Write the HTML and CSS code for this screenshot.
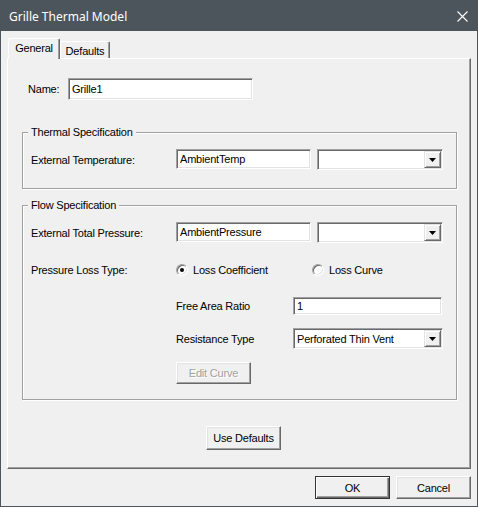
FILE: index.html
```html
<!DOCTYPE html>
<html>
<head>
<meta charset="utf-8">
<title>Grille Thermal Model</title>
<link rel="stylesheet" href="styles.css">
</head>
<body>
<div class="window">
  <div class="titlebar">
    <span class="title">Grille Thermal Model</span>
    <svg class="close" width="11" height="11" viewBox="0 0 11 11"><path d="M0.5 0.5 L10.5 10.5 M10.5 0.5 L0.5 10.5" stroke="#fff" stroke-width="1.1" fill="none"/></svg>
  </div>
  <div class="client">
    <div class="tabs">
      <div class="tab active">General</div>
      <div class="tab">Defaults</div>
    </div>
    <div class="panel">
      <div class="name-row">
        <span class="name-label">Name:</span>
        <div class="field name-field">Grille1</div>
      </div>

      <div class="group g1">
        <div class="legend">Thermal Specification</div>
        <div class="row row-field first">
          <span class="lbl">External Temperature:</span>
          <div class="field val">AmbientTemp</div>
          <div class="combo units"><span class="combo-text"></span><span class="combo-btn"><svg width="7" height="4" viewBox="0 0 7 4"><path d="M0 0H7L3.5 4Z" fill="#000"/></svg></span></div>
        </div>
      </div>

      <div class="group g2">
        <div class="legend">Flow Specification</div>
        <div class="row row-field first">
          <span class="lbl">External Total Pressure:</span>
          <div class="field val">AmbientPressure</div>
          <div class="combo units"><span class="combo-text"></span><span class="combo-btn"><svg width="7" height="4" viewBox="0 0 7 4"><path d="M0 0H7L3.5 4Z" fill="#000"/></svg></span></div>
        </div>
        <div class="row row-radio">
          <span class="lbl">Pressure Loss Type:</span>
          <label class="opt opt1"><span class="radio"><span class="dot"></span></span>Loss Coefficient</label>
          <label class="opt"><span class="radio"></span>Loss Curve</label>
        </div>
        <div class="row row-free">
          <span class="lbl2">Free Area Ratio</span>
          <div class="field ratio">1</div>
        </div>
        <div class="row row-res">
          <span class="lbl2">Resistance Type</span>
          <div class="combo restype"><span class="combo-text">Perforated Thin Vent</span><span class="combo-btn"><svg width="7" height="4" viewBox="0 0 7 4"><path d="M0 0H7L3.5 4Z" fill="#000"/></svg></span></div>
        </div>
        <div class="row row-btn">
          <div class="btn disabled">Edit Curve</div>
        </div>
      </div>

      <div class="btn use-defaults">Use Defaults</div>
    </div>
    <div class="footer">
      <div class="btn default">OK</div>
      <div class="btn">Cancel</div>
    </div>
  </div>
</div>
</body>
</html>
```

FILE: styles.css
```css
* { box-sizing: border-box; }
html, body { margin: 0; padding: 0; background: #f0f0f0; }
body {
  font-family: "Liberation Sans", Arial, sans-serif;
  font-size: 11px;
  letter-spacing: -0.2px;
  color: #000;
}
.window {
  width: 478px;
  height: 507px;
  border: 1px solid #4c555b;
  background: #f0f0f0;
  display: flex;
  flex-direction: column;
}
.titlebar {
  height: 30px;
  flex: none;
  background: #4c555b;
  color: #fff;
  display: flex;
  align-items: center;
  justify-content: space-between;
  padding: 0 9px 0 8px;
  font-family: "Noto Sans", sans-serif;
  font-size: 12px;
  letter-spacing: 0;
}
.close { display: block; }
.client {
  flex: 1;
  padding: 0 6px;
  display: flex;
  flex-direction: column;
}
.tabs {
  height: 20px;
  margin-top: 7px;
  padding-left: 1px;
  display: flex;
  align-items: flex-end;
}
.tab {
  height: 17px;
  width: 50px;
  border-top: 1px solid #fff;
  border-left: 1px solid #fff;
  border-right: 1px solid #696969;
  box-shadow: inset -1px 0 0 #a0a0a0;
  border-radius: 2px 2px 0 0;
  display: flex;
  align-items: center;
  justify-content: center;
  padding-top: 1px;
}
.tab.active {
  height: 21px;
  width: 52px;
  margin-bottom: -1px;
  position: relative;
  z-index: 1;
  background: #f0f0f0;
  padding-top: 0;
  padding-bottom: 3px;
}
.panel {
  height: 411px;
  flex: none;
  border: 1px solid;
  border-color: #fff #696969 #696969 #fff;
  box-shadow: inset -1px -1px 0 #a0a0a0;
  padding: 19px 0 0 14px;
}
.name-row {
  display: flex;
  align-items: center;
  height: 22px;
}
.name-label { margin-left: 6px; width: 40px; }
.field {
  background: #fff;
  border: 1px solid;
  border-color: #a0a0a0 #fff #fff #a0a0a0;
  box-shadow: inset 1px 1px 0 #696969, inset -1px -1px 0 #e3e3e3;
  padding: 0 3px;
  display: flex;
  align-items: center;
  white-space: nowrap;
}
.name-field { width: 185px; height: 22px; }
.group {
  width: 435px;
  border: 1px solid #a0a0a0;
  box-shadow: inset 1px 1px 0 #fff, 1px 1px 0 #fff;
  padding-left: 8px;
}
.g1 { margin-top: 32px; height: 57px; }
.g2 { margin-top: 16px; height: 195px; }
.legend {
  display: table;
  margin: -8px 0 0 -3px;
  padding: 0 3px;
  background: #f0f0f0;
  line-height: 14px;
}
.row { display: flex; align-items: center; }
.row-field { height: 21px; }
.row-field.first { margin-top: 10px; }
.lbl { width: 145px; flex: none; }
.val { width: 135px; height: 20px; align-self: flex-start; }
.combo {
  height: 21px;
  background: #fff;
  border: 1px solid;
  border-color: #a0a0a0 #fff #fff #a0a0a0;
  box-shadow: inset 1px 1px 0 #696969, inset -1px -1px 0 #e3e3e3;
  padding: 1px;
  display: flex;
}
.units { width: 126px; margin-left: 6px; }
.combo-text {
  flex: 1;
  padding: 1px 0 0 2px;
  display: flex;
  align-items: center;
  white-space: nowrap;
}
.combo-btn {
  width: 17px;
  flex: none;
  background: #f0f0f0;
  border: 1px solid;
  border-color: #e3e3e3 #696969 #696969 #e3e3e3;
  box-shadow: inset 1px 1px 0 #fff, inset -1px -1px 0 #a0a0a0;
  display: flex;
  align-items: center;
  justify-content: center;
}
.combo-btn svg { display: block; }
.row-radio { margin-top: 20px; height: 14px; }
.opt { display: flex; align-items: center; }
.opt1 { width: 136px; }
.radio {
  width: 12px;
  height: 12px;
  border-radius: 50%;
  border: 1px solid;
  border-color: #a0a0a0 #fff #fff #a0a0a0;
  box-shadow: inset 1px 1px 0 #696969, inset -1px -1px 0 #e3e3e3;
  background: #fff;
  margin-right: 5px;
  display: flex;
  align-items: center;
  justify-content: center;
}
.dot { width: 4px; height: 4px; border-radius: 50%; background: #000; }
.row-free { margin-top: 20px; height: 18px; padding-left: 145px; }
.lbl2 { width: 117px; flex: none; }
.ratio { width: 149px; height: 18px; }
.row-res { margin-top: 13px; height: 21px; padding-left: 145px; }
.restype { width: 150px; }
.row-btn { margin-top: 13px; padding-left: 145px; }
.btn {
  width: 75px;
  height: 23px;
  background: #f0f0f0;
  border: 1px solid;
  border-color: #fff #696969 #696969 #fff;
  box-shadow: inset -1px -1px 0 #a0a0a0, inset 1px 1px 0 #e3e3e3;
  display: flex;
  align-items: center;
  justify-content: center;
}
.btn.disabled { height: 22px; color: #a0a0a0; text-shadow: 1px 1px 0 #fff; }
.use-defaults { margin: 26px 0 0 184px; height: 24px; }
.footer {
  margin-top: 7px;
  display: flex;
  justify-content: flex-end;
  gap: 6px;
}
.btn.default {
  border-color: #333;
  box-shadow: inset 1px 1px 0 #fff, inset -1px -1px 0 #696969, inset -2px -2px 0 #a0a0a0;
}
```
